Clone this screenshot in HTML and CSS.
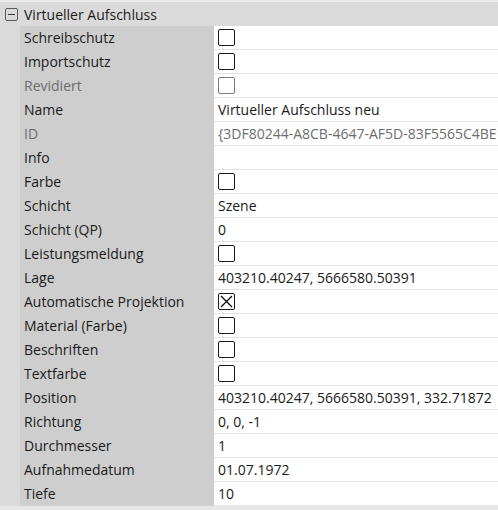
FILE: index.html
```html
<!DOCTYPE html>
<html>
<head>
<meta charset="utf-8">
<link rel="stylesheet" href="styles.css">
</head>
<body>
<div class="panel">
  <div class="header">
    <span class="toggle"><span class="minus"></span></span>
    <span class="title">Virtueller Aufschluss</span>
  </div>
  <div class="grid">
    <div class="row"><div class="label">Schreibschutz</div><div class="value"><span class="cb"></span></div></div>
    <div class="row"><div class="label">Importschutz</div><div class="value"><span class="cb"></span></div></div>
    <div class="row"><div class="label dim">Revidiert</div><div class="value"><span class="cb disabled"></span></div></div>
    <div class="row"><div class="label">Name</div><div class="value">Virtueller Aufschluss neu</div></div>
    <div class="row"><div class="label dim">ID</div><div class="value dim">{3DF80244-A8CB-4647-AF5D-83F5565C4BE1}</div></div>
    <div class="row"><div class="label">Info</div><div class="value"></div></div>
    <div class="row"><div class="label">Farbe</div><div class="value"><span class="cb"></span></div></div>
    <div class="row"><div class="label">Schicht</div><div class="value">Szene</div></div>
    <div class="row"><div class="label">Schicht (QP)</div><div class="value">0</div></div>
    <div class="row"><div class="label">Leistungsmeldung</div><div class="value"><span class="cb"></span></div></div>
    <div class="row"><div class="label">Lage</div><div class="value">403210.40247, 5666580.50391</div></div>
    <div class="row"><div class="label">Automatische Projektion</div><div class="value"><span class="cb checked"><svg width="17" height="17" viewBox="0 0 17 17"><path d="M3 3 L14 14 M14 3 L3 14" stroke="#000" stroke-width="1.2" fill="none"/></svg></span></div></div>
    <div class="row"><div class="label">Material (Farbe)</div><div class="value"><span class="cb"></span></div></div>
    <div class="row"><div class="label">Beschriften</div><div class="value"><span class="cb"></span></div></div>
    <div class="row"><div class="label">Textfarbe</div><div class="value"><span class="cb"></span></div></div>
    <div class="row"><div class="label">Position</div><div class="value">403210.40247, 5666580.50391, 332.71872</div></div>
    <div class="row"><div class="label">Richtung</div><div class="value">0, 0, -1</div></div>
    <div class="row"><div class="label">Durchmesser</div><div class="value">1</div></div>
    <div class="row"><div class="label">Aufnahmedatum</div><div class="value">01.07.1972</div></div>
    <div class="row"><div class="label">Tiefe</div><div class="value">10</div></div>
  </div>
  <div class="footer"></div>
</div>
</body>
</html>
```
FILE: styles.css
```css
html, body {
  margin: 0;
  padding: 0;
  background: #e6e6e6;
}
body {
  width: 498px;
  height: 510px;
  overflow: hidden;
  font-family: "Open Sans", "Noto Sans", sans-serif;
  font-size: 14px;
  color: #1a1a1a;
}
.panel {
  border-top: 2px solid #ebebeb;
  background: #dadada;
}
.header {
  height: 24px;
  display: flex;
  align-items: center;
  gap: 6px;
  padding-left: 5px;
}
.toggle {
  width: 11px;
  height: 11px;
  border: 1px solid #5a5a5a;
  border-radius: 2px;
  display: flex;
  align-items: center;
  justify-content: center;
}
.minus {
  width: 7px;
  height: 1px;
  background: #333;
}
.title {
  color: #1a1a1a;
}
.grid {
  padding-left: 20px;
}
.row {
  display: flex;
  height: 24px;
}
.label {
  width: 190px;
  flex: none;
  background: #cecece;
  padding-left: 4px;
  line-height: 23px;
  white-space: nowrap;
}
.value {
  flex: 1;
  background: #fff;
  border-bottom: 1px solid #e3e3e3;
  height: 23px;
  line-height: 23px;
  padding-left: 4px;
  white-space: nowrap;
  overflow: hidden;
  display: flex;
  align-items: center;
}
.dim {
  color: #6d6d6d;
}
.cb {
  width: 17px;
  height: 17px;
  box-sizing: border-box;
  border: 1px solid #1a1a1a;
  border-radius: 2px;
  background: #fff;
  display: block;
  position: relative;
}
.cb.disabled {
  border-color: #7a7a7a;
}
.cb svg {
  position: absolute;
  left: -1px;
  top: -1px;
}
.footer {
  height: 4px;
  background: #e6e6e6;
}
```
